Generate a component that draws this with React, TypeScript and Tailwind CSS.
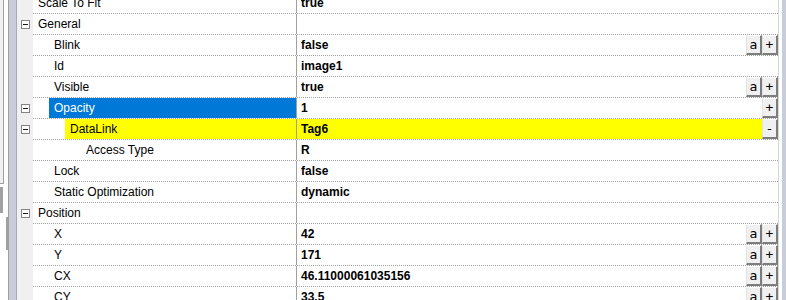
import React from "react";

type RowProps = {
  label: string;
  value?: string;
  level: number;
  expand?: boolean;
  hl?: "blue" | "yellow";
  btns?: "a+" | "+" | "-";
};

const padMap = ["pl-0", "pl-[16px]", "pl-[32px]", "pl-[48px]"];

function MinusBox() {
  return (
    <div className="w-[9px] h-[9px] border border-[#848484] bg-white flex items-center justify-center">
      <div className="w-[5px] h-px bg-[#1a1a1a]" />
    </div>
  );
}

function Btn({ ch }: { ch: string }) {
  return (
    <div className="w-[16px] h-[20px] bg-[#f0f0f0] border-t border-l border-t-white border-l-[#e3e3e3] border-r-2 border-b-2 border-r-[#7d7d7d] border-b-[#7d7d7d] flex items-center justify-center text-[13px] leading-none text-black font-['DejaVu_Sans_Mono',monospace]">
      {ch}
    </div>
  );
}

function Row({ label, value, level, expand, hl, btns }: RowProps) {
  const labelBg =
    hl === "blue" ? "bg-[#0078d7] text-white" : hl === "yellow" ? "bg-[#ffff00] text-black" : "text-black";
  const valBg = hl === "yellow" ? "bg-[#ffff00]" : "";
  return (
    <div className="flex h-[21px] shrink-0">
      <div className="w-[16px] bg-[#f0f0f0] flex items-center pl-[4px]">{expand && <MinusBox />}</div>
      <div className="flex w-[745px] h-[21px] border-b border-dotted border-[#a0a0a0]">
        <div className={`flex w-[263px] h-[20px] ${padMap[level]}`}>
          <div className={`flex-1 px-[5px] leading-[20px] whitespace-nowrap ${labelBg}`}>{label}</div>
        </div>
        <div className="w-px h-[20px] bg-[#a0a0a0]" />
        <div className="flex flex-1 h-[20px]">
          <div className={`flex-1 pl-[4px] leading-[20px] font-bold whitespace-nowrap text-black ${valBg}`}>{value}</div>
          {btns === "a+" && (
            <>
              <Btn ch="a" />
              <Btn ch="+" />
            </>
          )}
          {btns === "+" && <Btn ch="+" />}
          {btns === "-" && <Btn ch="-" />}
        </div>
      </div>
    </div>
  );
}

export default function App() {
  const rows: RowProps[] = [
    { label: "Scale To Fit", value: "true", level: 0 },
    { label: "General", level: 0, expand: true },
    { label: "Blink", value: "false", level: 1, btns: "a+" },
    { label: "Id", value: "image1", level: 1 },
    { label: "Visible", value: "true", level: 1, btns: "a+" },
    { label: "Opacity", value: "1", level: 1, expand: true, hl: "blue", btns: "+" },
    { label: "DataLink", value: "Tag6", level: 2, expand: true, hl: "yellow", btns: "-" },
    { label: "Access Type", value: "R", level: 3 },
    { label: "Lock", value: "false", level: 1 },
    { label: "Static Optimization", value: "dynamic", level: 1 },
    { label: "Position", level: 0, expand: true },
    { label: "X", value: "42", level: 1, btns: "a+" },
    { label: "Y", value: "171", level: 1, btns: "a+" },
    { label: "CX", value: "46.11000061035156", level: 1, btns: "a+" },
    { label: "CY", value: "33.5", level: 1, btns: "a+" },
  ];
  return (
    <div className="flex w-[786px] h-[300px] overflow-hidden bg-white font-['Liberation_Sans',Arial,sans-serif] text-[12px]">
      {/* left strip */}
      <div className="flex w-[17px] h-[300px] shrink-0">
        <div className="flex flex-col w-[3px]">
          <div className="h-[183px] bg-[#f0f0f0]" />
          <div className="h-px bg-[#a0a0a0]" />
          <div className="h-[3px] bg-white" />
          <div className="h-[26px] bg-[#a0a0a0]" />
          <div className="flex-1 bg-white" />
        </div>
        <div className="flex flex-col w-px">
          <div className="h-[184px] bg-[#a0a0a0]" />
          <div className="flex-1 bg-white" />
        </div>
        <div className="flex flex-col w-[4px] bg-white">
          <div className="h-[217px]" />
          <div className="flex h-[33px]">
            <div className="w-[2px]" />
            <div className="w-[2px] bg-[#a0a0a0]" />
          </div>
        </div>
        <div className="w-px bg-[#a0a0a0]" />
        <div className="w-[7px] bg-[#c9cdd9]" />
        <div className="w-px bg-[#a6aab6]" />
      </div>
      {/* property grid */}
      <div className="flex flex-col w-[761px] h-[300px] overflow-hidden">
        <div className="flex flex-col mt-[-7px]">
          {rows.map((r, i) => (
            <Row key={i} {...r} />
          ))}
        </div>
        <div className="flex-1 bg-[#f0f0f0] w-[16px]" />
      </div>
      {/* right strip */}
      <div className="flex w-[8px] h-[300px] shrink-0">
        <div className="w-px bg-[#d8d8d8]" />
        <div className="w-[3px] bg-white" />
        <div className="w-[4px] bg-[#c9cdd9]" />
      </div>
    </div>
  );
}
